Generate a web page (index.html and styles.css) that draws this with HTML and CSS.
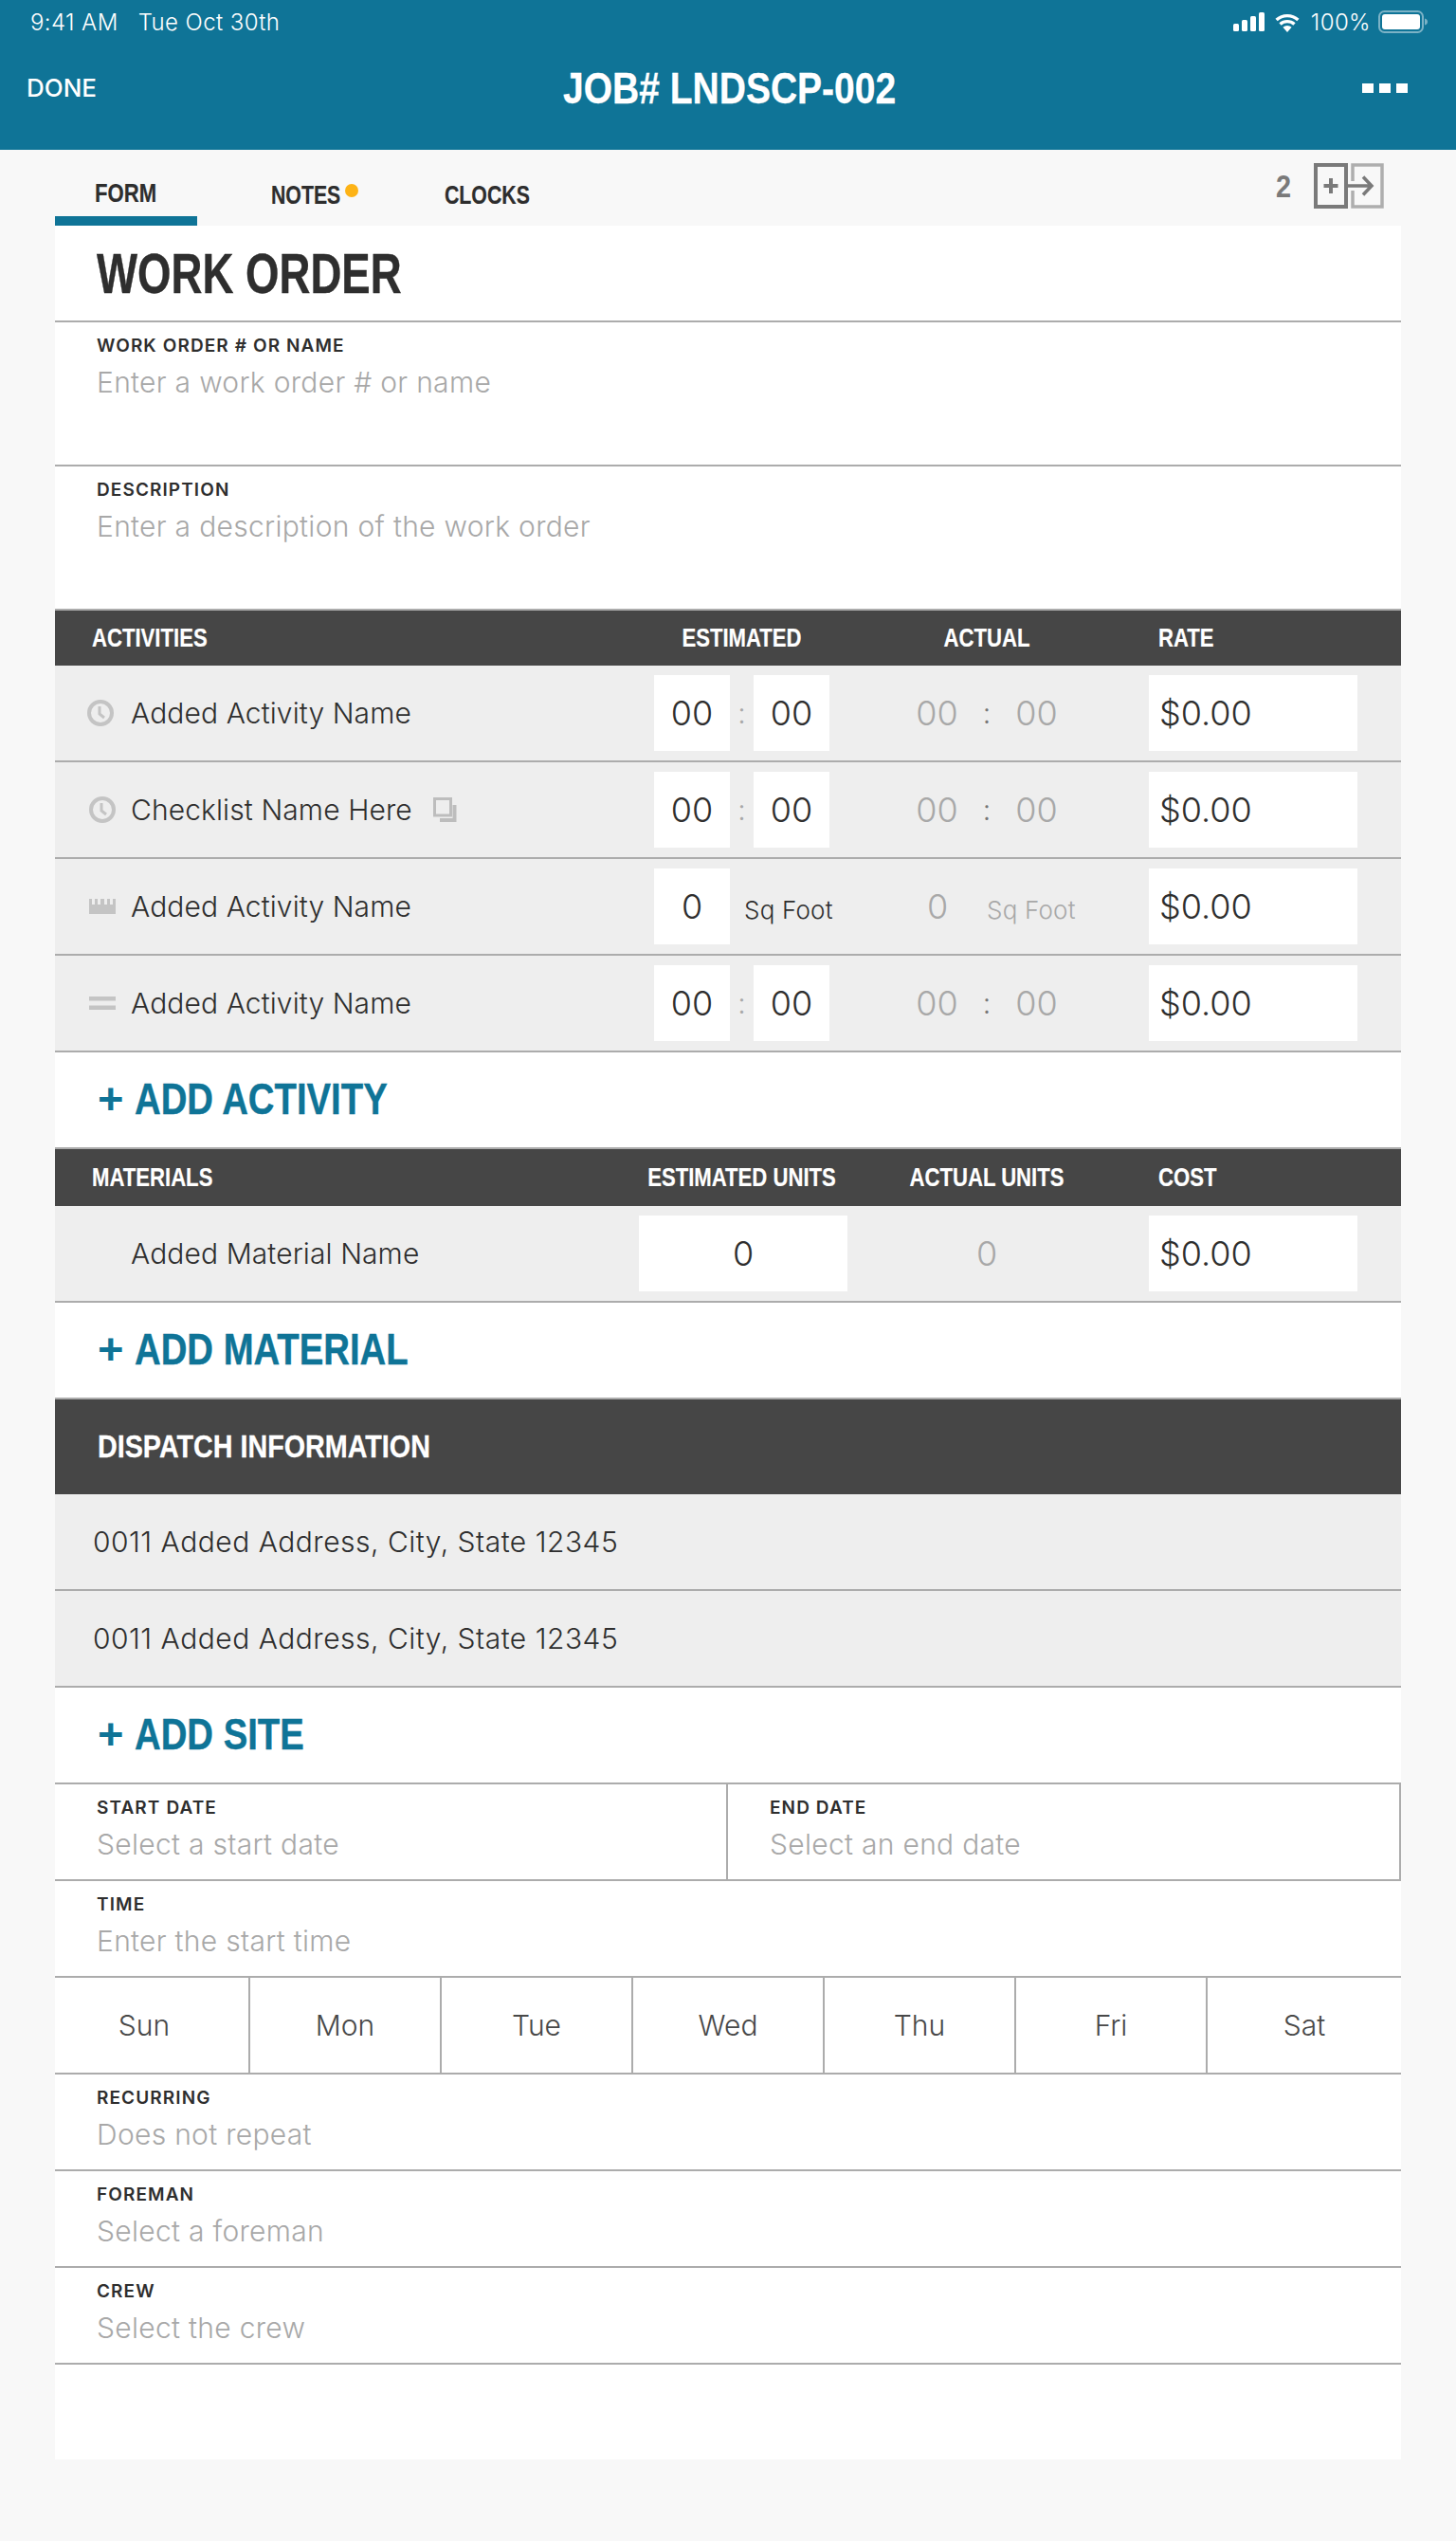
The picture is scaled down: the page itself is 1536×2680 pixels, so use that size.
FILE: index.html
```html
<!DOCTYPE html>
<html lang="en">
<head>
<meta charset="utf-8">
<title>Work Order</title>
<link rel="stylesheet" href="styles.css">
</head>
<body>
<header class="appbar">
  <div class="status">
    <div class="status-left"><span>9:41 AM</span><span>Tue Oct 30th</span></div>
    <div class="status-right">
      <svg class="i-signal" width="34" height="20" viewBox="0 0 34 20"><rect x="0" y="12" width="6" height="8" rx="1.5"/><rect x="9" y="8" width="6" height="12" rx="1.5"/><rect x="18" y="4" width="6" height="16" rx="1.5"/><rect x="27" y="0" width="6" height="20" rx="1.5"/></svg>
      <svg class="i-wifi" width="28" height="21" viewBox="0 0 28 21"><path d="M14 21l-4.600-5.200a7 7 0 0 1 9.200 0z" fill="#fff"/><path d="M6.500 12.500a11.300 11.300 0 0 1 15 0M2.600 8a17 17 0 0 1 22.800 0" fill="none" stroke="#fff" stroke-width="3.400"/></svg>
      <span class="pct">100%</span>
      <svg class="i-batt" width="52" height="24" viewBox="0 0 52 24"><rect x="1" y="1" width="46" height="22" rx="5.500" fill="none" stroke="#fff" stroke-opacity=".45" stroke-width="2"/><rect x="4" y="4" width="40" height="16" rx="3" fill="#fff"/><path d="M49 8.500c2 .4 3 1.800 3 3.500s-1 3.100-3 3.500z" fill="#fff" fill-opacity=".45"/></svg>
    </div>
  </div>
  <div class="navrow">
    <span class="done">DONE</span>
    <h1 class="job">JOB# LNDSCP-002</h1>
    <span class="more"><i></i><i></i><i></i></span>
  </div>
</header>

<div class="tabs">
  <div class="tab active"><span class="tabtxt">FORM</span></div>
  <div class="tab notes"><span class="tabtxt">NOTES</span><i class="dot"></i></div>
  <div class="tab clocks"><span class="tabtxt">CLOCKS</span></div>
  <div class="tabs-right">
    <span class="count">2</span>
    <svg width="74" height="48" viewBox="0 0 74 48"><path d="M41 19V2h31v44H41V29" fill="none" stroke="#aeaeae" stroke-width="3.500"/><rect x="2" y="2" width="32" height="44" fill="none" stroke="#7a7a7a" stroke-width="4"/><path d="M18 16v16M10.500 24h15" stroke="#7a7a7a" stroke-width="4" fill="none"/><path d="M34 24h26M52 14.500l9 9.500-9 9.500" stroke="#7a7a7a" stroke-width="3.500" fill="none"/></svg>
  </div>
</div>

<main class="card">
  <h2 class="title"><span>WORK ORDER</span></h2>
  <div class="field tall"><div class="lbl">WORK ORDER # OR NAME</div><div class="ph">Enter a work order # or name</div></div>
  <div class="field tall"><div class="lbl">DESCRIPTION</div><div class="ph">Enter a description of the work order</div></div>

  <div class="thead grid act">
    <span class="th-name">ACTIVITIES</span><span class="c">ESTIMATED</span><span class="c">ACTUAL</span><span class="th-rate">RATE</span>
  </div>
  <div class="row grid">
    <div class="name">
      <svg class="ic first" width="28" height="28" viewBox="0 0 28 28"><circle cx="14" cy="14" r="12" fill="none" stroke="#c4c4c4" stroke-width="4"/><path d="M13 7v8l5 4" fill="none" stroke="#c4c4c4" stroke-width="3"/></svg>
      <span>Added Activity Name</span>
    </div>
    <div class="time"><b class="box">00</b><em>:</em><b class="box">00</b></div>
    <div class="time off"><b>00</b><em>:</em><b>00</b></div>
    <div class="rate"><b class="box">$0.00</b></div>
  </div>
  <div class="row grid">
    <div class="name">
      <svg class="ic" width="28" height="28" viewBox="0 0 28 28"><circle cx="14" cy="14" r="12" fill="none" stroke="#c4c4c4" stroke-width="4"/><path d="M13 7v8l5 4" fill="none" stroke="#c4c4c4" stroke-width="3"/></svg>
      <span>Checklist Name Here</span>
      <svg class="copy" width="26" height="26" viewBox="0 0 26 26"><path d="M1.500 1.500H18.500V19H1.500z" fill="none" stroke="#bdbdbd" stroke-width="3"/><path d="M22.500 8v16H7" fill="none" stroke="#bdbdbd" stroke-width="4"/></svg>
    </div>
    <div class="time"><b class="box">00</b><em>:</em><b class="box">00</b></div>
    <div class="time off"><b>00</b><em>:</em><b>00</b></div>
    <div class="rate"><b class="box">$0.00</b></div>
  </div>
  <div class="row grid">
    <div class="name">
      <svg class="ic" width="28" height="16" viewBox="0 0 28 16"><path d="M0 0h3v6h3V0h3v6h3V0h4v6h3V0h3v6h3V0h3v16H0z" fill="#c4c4c4"/></svg>
      <span>Added Activity Name</span>
    </div>
    <div class="units"><b class="box">0</b><span class="unit">Sq Foot</span></div>
    <div class="units off"><b>0</b><span class="unit">Sq Foot</span></div>
    <div class="rate"><b class="box">$0.00</b></div>
  </div>
  <div class="row grid">
    <div class="name">
      <svg class="ic" width="28" height="14" viewBox="0 0 28 14"><path d="M0 0h28v4.500H0zM0 9.500h28V14H0z" fill="#c4c4c4"/></svg>
      <span>Added Activity Name</span>
    </div>
    <div class="time"><b class="box">00</b><em>:</em><b class="box">00</b></div>
    <div class="time off"><b>00</b><em>:</em><b>00</b></div>
    <div class="rate"><b class="box">$0.00</b></div>
  </div>
  <div class="add"><span class="plus">+</span><span class="addtxt">ADD ACTIVITY</span></div>

  <div class="thead grid">
    <span class="th-name">MATERIALS</span><span class="c">ESTIMATED UNITS</span><span class="c">ACTUAL UNITS</span><span class="th-rate">COST</span>
  </div>
  <div class="row grid">
    <div class="name noicon"><span>Added Material Name</span></div>
    <div class="qty est"><b class="box wide">0</b></div>
    <div class="qty off"><b>0</b></div>
    <div class="rate"><b class="box">$0.00</b></div>
  </div>
  <div class="add"><span class="plus">+</span><span class="addtxt">ADD MATERIAL</span></div>

  <div class="dispatch"><span>DISPATCH INFORMATION</span></div>
  <div class="addr">0011 Added Address, City, State 12345</div>
  <div class="addr">0011 Added Address, City, State 12345</div>
  <div class="add"><span class="plus">+</span><span class="addtxt">ADD SITE</span></div>

  <div class="dates">
    <div class="field"><div class="lbl">START DATE</div><div class="ph">Select a start date</div></div>
    <div class="field end"><div class="lbl">END DATE</div><div class="ph">Select an end date</div></div>
  </div>
  <div class="field"><div class="lbl">TIME</div><div class="ph">Enter the start time</div></div>
  <div class="days">
    <span class="day sun">Sun</span><span class="day">Mon</span><span class="day">Tue</span><span class="day">Wed</span><span class="day">Thu</span><span class="day">Fri</span><span class="day">Sat</span>
  </div>
  <div class="field"><div class="lbl">RECURRING</div><div class="ph">Does not repeat</div></div>
  <div class="field"><div class="lbl">FOREMAN</div><div class="ph">Select a foreman</div></div>
  <div class="field"><div class="lbl">CREW</div><div class="ph">Select the crew</div></div>
</main>
</body>
</html>
```
FILE: styles.css
```css
* { box-sizing: border-box; }
html, body { margin: 0; padding: 0; }
body {
  background: #f8f8f8;
  font-family: Inter, "Noto Sans", sans-serif;
  color: #2e2e2e;
  height: 2680px;
  overflow: hidden;
}

/* Condensed headline type: Liberation Sans Bold narrowed horizontally */
.job, .tabtxt, .count, .title span, .thead span, .addtxt, .dispatch span, .plus {
  font-family: "Liberation Sans", Arimo, sans-serif;
  font-weight: 700;
}
.job, .tabtxt, .count, .title span, .addtxt, .dispatch span {
  display: inline-block;
  transform-origin: 0 50%;
  white-space: nowrap;
}

.appbar { background: #0f7497; height: 158px; color: #fff; position: relative; }
.status {
  height: 46px;
  padding: 0 30px 0 32px;
  display: flex;
  justify-content: space-between;
  align-items: center;
  font-size: 24px;
  font-weight: 300;
  letter-spacing: .4px;
}
.status-left { display: flex; gap: 21px; }
.status-right { display: flex; align-items: center; }
.i-signal { fill: #fff; }
.i-wifi { margin-left: 9px; }
.pct { margin-left: 11px; }
.i-batt { margin-left: 8px; }
.navrow {
  height: 96px;
  padding: 0 51px 3px 28px;
  display: flex;
  align-items: center;
  justify-content: space-between;
}
.done { font-size: 26px; font-weight: 500; letter-spacing: 0; }
.job {
  margin: 0;
  font-size: 47px;
  transform: scaleX(.83);
  transform-origin: 50% 50%;
  -webkit-text-stroke: .3px #fff;
}
.more { display: flex; gap: 6px; }
.more i { width: 12px; height: 10px; background: #fff; display: block; }

.tabs {
  height: 80px;
  margin: 0 58px;
  display: flex;
  position: relative;
  font-size: 28px;
}
.tab { display: flex; align-items: center; padding-top: 16px; }
.tabtxt { transform: scaleX(.76); -webkit-text-stroke: .2px #2e2e2e; }
.tab.active {
  width: 150px;
  border-bottom: 10px solid #0f7497;
  padding: 21px 0 0 42px;
}
.tab.active .tabtxt { transform: scaleX(.79); }
.tab.notes { margin-left: 78px; position: relative; width: 105px; }
.dot {
  position: absolute;
  left: 78px;
  top: 36px;
  width: 14px;
  height: 14px;
  border-radius: 50%;
  background: #fdb316;
}
.tab.clocks { margin-left: 78px; }
.tabs-right {
  margin-left: auto;
  margin-right: 18px;
  padding-top: 14px;
  display: flex;
  align-items: flex-start;
  gap: 21px;
}
.count { color: #7a7a7a; font-size: 34px; line-height: 48px; transform: scaleX(.85); }

.card { margin: 0 58px; background: #fff; height: 2356px; }
.title {
  margin: 0;
  height: 102px;
  border-bottom: 2px solid #acacac;
  padding: 17px 0 0 44px;
  font-size: 60px;
  line-height: 64px;
}
.title span { transform: scaleX(.76); -webkit-text-stroke: .4px #2e2e2e; }
.field {
  height: 102px;
  border-bottom: 2px solid #acacac;
  padding: 14px 0 0 44px;
}
.field.tall { height: 152px; }
.lbl { font-size: 19px; font-weight: 600; line-height: 22px; letter-spacing: 1.1px; }
.ph { font-size: 30px; font-weight: 300; line-height: 36px; margin-top: 9px; color: #a8a8a8; letter-spacing: .3px; }

.grid { display: grid; grid-template-columns: 594px 261px 256px 1fr; align-items: center; }
.thead {
  height: 60px;
  background: #464646;
  color: #fff;
  font-size: 28px;
  line-height: 60px;
}
.thead.act { height: 58px; line-height: 58px; }
.thead span { transform: scaleX(.79); white-space: nowrap; -webkit-text-stroke: .2px #fff; }
.thead .c { text-align: center; }
.th-name { padding-left: 39px; transform-origin: 39px 50%; }
.th-rate { padding-left: 53px; transform-origin: 53px 50%; }

.row { height: 102px; background: #eee; border-bottom: 2px solid #acacac; }
.name {
  display: flex;
  align-items: center;
  font-size: 30px;
  font-weight: 300;
  padding-left: 36px;
  letter-spacing: .1px;
}
.name .ic { margin-right: 16px; flex: none; }
.name .ic.first { margin-left: -2px; margin-right: 18px; }
.name.noicon { padding-left: 80px; }
.copy { margin-left: 22px; }

.box { background: #fff; }
.time, .units, .qty { display: flex; align-items: center; justify-content: center; }
.time b, .units b, .rate b, .qty b {
  width: 80px;
  height: 80px;
  display: flex;
  align-items: center;
  justify-content: center;
  font-size: 36px;
  font-weight: 300;
}
.time em { width: 25px; text-align: center; font-style: normal; font-size: 30px; font-weight: 300; color: #a8a8a8; }
.off { color: #a8a8a8; }
.off em { color: #777; }
.units { justify-content: flex-start; padding-left: 38px; }
.units.off { padding-left: 36px; }
.unit { font-size: 26px; font-weight: 300; margin-left: 15px; padding-top: 6px; white-space: nowrap; letter-spacing: .2px; }
.units.off .unit { margin-left: 12px; }
.rate { padding-left: 43px; }
.rate b { width: 220px; justify-content: flex-start; padding-left: 11px; }
.qty.est { padding-left: 3px; }
.qty b.wide { width: 220px; }

.add {
  height: 102px;
  border-bottom: 2px solid #acacac;
  color: #0f7497;
  font-size: 47px;
  line-height: 98px;
  padding-left: 45px;
  display: flex;
}
.plus { width: 39px; flex: none; }
.addtxt { transform: scaleX(.815); -webkit-text-stroke: .4px #0f7497; }

.dispatch {
  height: 100px;
  background: #464646;
  color: #fff;
  font-size: 33px;
  line-height: 98px;
  padding-left: 45px;
}
.dispatch span { transform: scaleX(.87); -webkit-text-stroke: .3px #fff; }
.addr {
  height: 102px;
  background: #eee;
  border-bottom: 2px solid #acacac;
  font-size: 30px;
  font-weight: 300;
  line-height: 100px;
  padding-left: 40px;
  letter-spacing: .5px;
}
.dates { display: grid; grid-template-columns: 708px 712px; }
.dates .field.end { border-left: 2px solid #acacac; border-right: 2px solid #acacac; padding-left: 44px; }
.days {
  height: 102px;
  display: grid;
  grid-template-columns: 206px repeat(5, 202px) 204px;
  border-bottom: 2px solid #acacac;
}
.day {
  display: flex;
  align-items: center;
  justify-content: center;
  border-right: 2px solid #acacac;
  font-size: 30px;
  font-weight: 300;
  color: #484848;
}
.day:last-child { border-right: 0; }
.day.sun { padding-right: 16px; }
```
